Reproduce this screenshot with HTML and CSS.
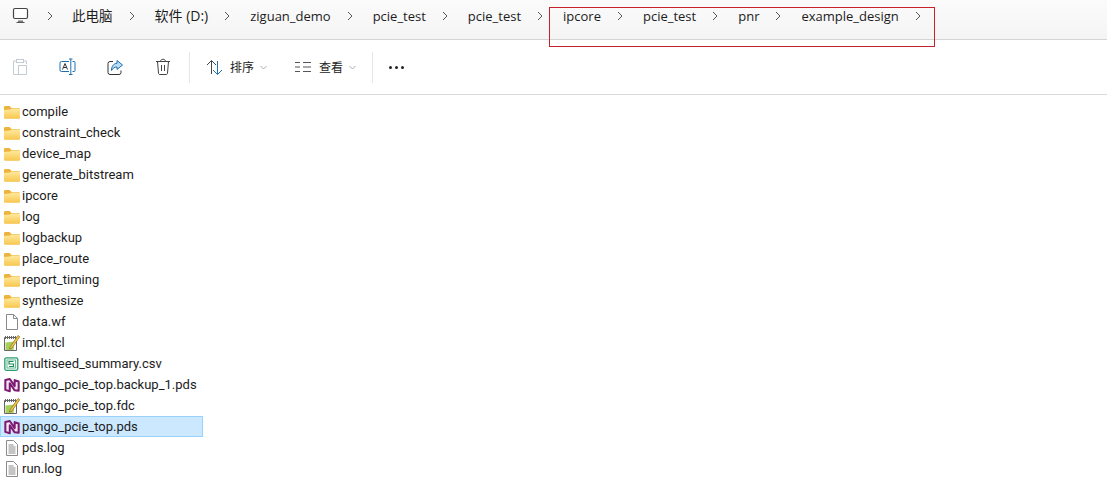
FILE: index.html
```html
<!DOCTYPE html>
<html lang="zh-CN">
<head>
    <meta charset="UTF-8">
    <title>example_design</title>
    <link rel="stylesheet" href="styles.css">
</head>
<body>
    <svg class="sprite" width="0" height="0">
        <defs>
            <symbol id="chev" viewBox="0 0 8 10"><path d="M2 1l4 4-4 4" fill="none" stroke="#555" stroke-width="1"/></symbol>
            <linearGradient id="fold" x1="0" y1="0" x2="0" y2="1"><stop offset="0" stop-color="#ffe9a0"/><stop offset="1" stop-color="#f8c850"/></linearGradient>
            <symbol id="folder" viewBox="0 0 16 14">
                <path d="M0 2.500C0 1.500.5 1 1.500 1h4l2 2h7c1 0 1.500.5 1.500 1.500V12c0 1-.5 1.500-1.500 1.500h-13C.5 13.500 0 13 0 12z" fill="#eeb33c"/>
                <path d="M0 5l6-.5 1.500-1H16V12c0 1-.5 1.500-1.500 1.500h-13C.5 13.500 0 13 0 12z" fill="url(#fold)"/>
            </symbol>
            <symbol id="blank" viewBox="0 0 16 16"><path d="M2.500.5h7l4 4v11h-11z" fill="#fff" stroke="#8a8a8a"/><path d="M9.500.5v4h4" fill="none" stroke="#8a8a8a"/></symbol>
            <symbol id="text" viewBox="0 0 16 16"><path d="M2.500.5h7l4 4v11h-11z" fill="#fff" stroke="#8a8a8a"/><path d="M4.500 5h5M4.500 7h7M4.500 9h7M4.500 11h7M4.500 13h7" stroke="#8a8a8a"/></symbol>
            <symbol id="note" viewBox="0 0 16 16">
                <path d="M.5 2.500h12v13H.5z" fill="#fff" stroke="#666"/>
                <path d="M1.500 1v3M3.500 1v3M5.500 1v3M7.500 1v3M9.500 1v3M11.500 1v3" stroke="#666"/>
                <path d="M1.500 7.500l9-1-1 8.500h-8z" fill="#a8cf5a"/>
                <path d="M6 12L14 .5l1.800 1.200L8 13l-2.500 1z" fill="#f2c84b" stroke="#7a5a18" stroke-width=".6"/>
            </symbol>
            <symbol id="csv" viewBox="0 0 16 16">
                <rect x=".8" y="1.800" width="13" height="12.500" rx="1.500" fill="#eaf8f1" stroke="#2f9e6e" stroke-width="1.300"/>
                <rect x="3" y="4" width="8.500" height="8" fill="#fff" stroke="#2f9e6e" stroke-width=".7"/>
                <path d="M9.500 5.500h-4.500v2.500h4.500v2.500H5" fill="none" stroke="#1f8a5a" stroke-width="1.200"/>
            </symbol>
            <symbol id="pds" viewBox="0 0 18 16">
                <path d="M1.500 2.500l5-1.300 5.500 8V2.500l4.500 1.500v10.500L12 14 6.500 6v9l-5-1.500z" fill="#f3e6f2" stroke="#7d1a72" stroke-width="2.300" stroke-linejoin="round"/>
            </symbol>
        </defs>
    </svg>

    <header class="crumbs">
        <svg class="pc-icon" width="17" height="17" viewBox="0 0 17 17">
            <rect x="1.500" y="1.500" width="14" height="10" rx="1.500" fill="#fff" stroke="#444" stroke-width="1.200"/>
            <path d="M6 13.500h5v1.500H6z" fill="#777"/><path d="M4.500 15.500h8" stroke="#555"/>
        </svg>
        <svg class="chev first"><use href="#chev"/></svg>
        <span class="crumb cjk">此电脑</span><svg class="chev"><use href="#chev"/></svg>
        <span class="crumb drive">软件 (D:)</span><svg class="chev"><use href="#chev"/></svg>
        <span class="crumb">ziguan_demo</span><svg class="chev"><use href="#chev"/></svg>
        <span class="crumb">pcie_test</span><svg class="chev"><use href="#chev"/></svg>
        <span class="crumb">pcie_test</span><svg class="chev"><use href="#chev"/></svg>
        <span class="crumb">ipcore</span><svg class="chev"><use href="#chev"/></svg>
        <span class="crumb">pcie_test</span><svg class="chev"><use href="#chev"/></svg>
        <span class="crumb">pnr</span><svg class="chev"><use href="#chev"/></svg>
        <span class="crumb">example_design</span><svg class="chev"><use href="#chev"/></svg>
    </header>
    <div class="red-box"></div>

    <div class="toolbar">
        <div class="tool-icons">
            <svg width="16" height="18" viewBox="0 0 16 18" fill="none" stroke="#c3ccd4">
                <path d="M4 3H1.500v13.500H6M12 3h2.500v3"/><rect x="4.500" y="1.500" width="7" height="3"/><rect x="6.500" y="7.500" width="8" height="9"/>
            </svg>
            <svg width="17" height="18" viewBox="0 0 17 18" fill="none" stroke="#1f6fb0">
                <path d="M10 3.500H2.500a1.500 1.500 0 0 0-1.500 1.500v7a1.500 1.500 0 0 0 1.500 1.500H10M13.500 3.500H15a1 1 0 0 1 1 1v8a1 1 0 0 1-1 1h-1.500"/>
                <path d="M10 1h3.500M10 16.500h3.500M11.800 1v15.500"/>
                <path d="M3.500 11.500l2.500-6 2.500 6M4.500 9.500h3" stroke="#333"/>
            </svg>
            <svg width="17" height="17" viewBox="0 0 17 17" fill="none" stroke="#333">
                <path d="M6 2.500H3A2 2 0 0 0 1 4.500v9a2 2 0 0 0 2 2h9a2 2 0 0 0 2-2v-2"/>
                <path d="M10 1.500l5.500 4.500L10 10.500V8C7.500 8 6 9 4.500 11.500 4.500 7.500 6.500 4.500 10 4.300z" fill="#bcdcf3" stroke="#1f6fb0"/>
            </svg>
            <svg width="16" height="18" viewBox="0 0 16 18" fill="none" stroke="#444">
                <path d="M1 3.500h14M5.500 3.500c0-3 5-3 5 0M2.500 3.500l1 11.500c0 1 .5 1.500 1.500 1.500h6c1 0 1.500-.5 1.500-1.500l1-11.500M6.500 7v6M9.500 7v6"/>
            </svg>
        </div>
        <span class="tool-sep"></span>
        <button class="tool-btn sort-btn">
            <svg width="16" height="15" viewBox="0 0 16 15" fill="none">
                <path d="M1 5l4.500-4.500L10 5M5.500 1v13" stroke="#444"/><path d="M7 10l4.500 4.500L16 10M11.500 1v13" stroke="#1f6fb0"/>
            </svg>
            <span>排序</span><svg class="caret" width="7" height="5" viewBox="0 0 7 5"><path d="M.5 1l3 3 3-3" fill="none" stroke="#aaa"/></svg>
        </button>
        <button class="tool-btn view-btn">
            <svg width="16" height="12" viewBox="0 0 16 12" stroke="#555">
                <path d="M0 1.500h5M0 6h5M0 10.500h5M8 1.500h8M8 6h8M8 10.500h8"/>
            </svg>
            <span>查看</span><svg class="caret" width="7" height="5" viewBox="0 0 7 5"><path d="M.5 1l3 3 3-3" fill="none" stroke="#aaa"/></svg>
        </button>
        <span class="tool-sep"></span>
        <div class="more"><i></i><i></i><i></i></div>
    </div>

    <ul class="files">
        <li><svg class="ico"><use href="#folder"/></svg>compile</li>
        <li><svg class="ico"><use href="#folder"/></svg>constraint_check</li>
        <li><svg class="ico"><use href="#folder"/></svg>device_map</li>
        <li><svg class="ico"><use href="#folder"/></svg>generate_bitstream</li>
        <li><svg class="ico"><use href="#folder"/></svg>ipcore</li>
        <li><svg class="ico"><use href="#folder"/></svg>log</li>
        <li><svg class="ico"><use href="#folder"/></svg>logbackup</li>
        <li><svg class="ico"><use href="#folder"/></svg>place_route</li>
        <li><svg class="ico"><use href="#folder"/></svg>report_timing</li>
        <li><svg class="ico"><use href="#folder"/></svg>synthesize</li>
        <li><svg class="ico"><use href="#blank"/></svg>data.wf</li>
        <li><svg class="ico"><use href="#note"/></svg>impl.tcl</li>
        <li><svg class="ico"><use href="#csv"/></svg>multiseed_summary.csv</li>
        <li><svg class="ico"><use href="#pds"/></svg>pango_pcie_top.backup_1.pds</li>
        <li><svg class="ico"><use href="#note"/></svg>pango_pcie_top.fdc</li>
        <li class="selected"><svg class="ico"><use href="#pds"/></svg>pango_pcie_top.pds</li>
        <li><svg class="ico"><use href="#text"/></svg>pds.log</li>
        <li><svg class="ico"><use href="#text"/></svg>run.log</li>
    </ul>
</body>
</html>
```

FILE: styles.css
```css
* {
    margin: 0;
    padding: 0;
    box-sizing: border-box;
}

body {
    width: 1107px;
    height: 484px;
    overflow: hidden;
    position: relative;
    background: #fff;
    color: #1c1c1c;
    font-family: "Open Sans", "Noto Sans CJK SC", sans-serif;
    font-size: 13px;
}

.sprite {
    position: absolute;
}

/* Breadcrumb bar */
.crumbs {
    height: 40px;
    padding: 7px 0 0 12px;
    display: flex;
    align-items: flex-start;
    background: linear-gradient(#fbfbfb, #f4f4f4);
    border-bottom: 1px solid #d4d4d4;
}

.pc-icon {
    margin-right: 17px;
}

.chev {
    width: 8px;
    height: 10px;
    margin: 4px 19px 0 15px;
    flex: none;
}

.chev.first {
    margin-left: 0;
    margin-right: 18px;
}

.crumb {
    line-height: 18px;
    white-space: nowrap;
}

.crumb.cjk {
    font-size: 13.5px;
}

.crumb.drive {
    font-size: 14px;
}

.red-box {
    position: absolute;
    left: 549px;
    top: 7px;
    width: 386px;
    height: 40px;
    border: 1px solid #c8202c;
}

/* Toolbar */
.toolbar {
    height: 55px;
    display: flex;
    align-items: center;
    border-bottom: 1px solid #d9d9d9;
}

.tool-icons {
    display: flex;
    align-items: center;
    gap: 31px;
    padding-left: 12px;
}

.tool-sep {
    width: 1px;
    height: 31px;
    background: #e6e6e6;
}

.tool-icons + .tool-sep {
    margin-left: 18px;
}

.tool-btn {
    display: flex;
    align-items: center;
    border: none;
    background: none;
    font: inherit;
    font-size: 12px;
    color: #222;
}

.tool-btn span {
    margin: 0 6px 0 8px;
}

.sort-btn {
    margin-left: 16px;
}

.view-btn {
    margin: 0 16px 0 28px;
}

.more {
    display: flex;
    gap: 3px;
    margin-left: 16px;
}

.more i {
    width: 3px;
    height: 3px;
    border-radius: 50%;
    background: #222;
}

/* File list */
.files {
    list-style: none;
    padding-top: 6px;
    font-family: Roboto, sans-serif;
}

.files li {
    width: 203px;
    height: 21px;
    display: flex;
    align-items: center;
    white-space: nowrap;
    padding-left: 4px;
}

.ico {
    width: 16px;
    height: 16px;
    margin-right: 2px;
    flex: none;
}

.selected {
    background: #cce8ff;
    box-shadow: inset 0 0 0 1px #99d1ff;
}
```
